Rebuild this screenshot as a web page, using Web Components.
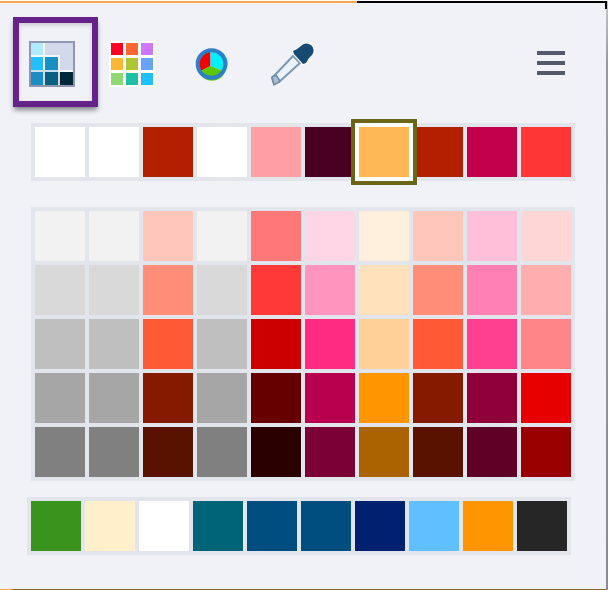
<!DOCTYPE html>
<html>
<head>
<meta charset="utf-8">
<title>Color picker</title>
<style>
    html, body { margin: 0; padding: 0; background: #fff; overflow: hidden; }
</style>
</head>
<body>
<picker-window></picker-window>
<script>
class ToolButton extends HTMLElement {
    constructor() {
        super();
        this.attachShadow({ mode: "open" });
        this.shadowRoot.innerHTML = `
            <style>
                :host {
                    display: block;
                    flex: none;
                    width: var(--w, 46px);
                    height: var(--h, 46px);
                    margin-top: 24px;
                    cursor: pointer;
                }
                :host([active]) {
                    box-sizing: border-box;
                    width: 85px;
                    height: 90px;
                    margin-top: 0;
                    padding: 18px 0 0 10px;
                    border: 6px solid #662288;
                    box-shadow: 0 4px 5px -1px rgba(40, 40, 50, .55), inset 0 2px 4px rgba(40, 40, 50, .2);
                }
                ::slotted(svg) { display: block; filter: blur(.45px); }
            </style>
            <slot></slot>
        `;
    }
}

class ColorSwatch extends HTMLElement {
    constructor() {
        super();
        this.attachShadow({ mode: "open" });
        const color = this.getAttribute("color") || "#fff";
        this.shadowRoot.innerHTML = `
            <style>
                :host {
                    display: block;
                    width: 50px;
                    height: 50px;
                    background: ${color};
                }
                :host([selected]) {
                    position: relative;
                    z-index: 1;
                    box-shadow: 0 0 0 4px #fff, 0 0 0 8px #6a6518;
                }
            </style>
        `;
    }
}

class SwatchTray extends HTMLElement {
    constructor() {
        super();
        this.attachShadow({ mode: "open" });
        this.shadowRoot.innerHTML = `
            <style>
                :host {
                    display: grid;
                    grid-template-columns: repeat(10, 50px);
                    gap: 4px;
                    width: max-content;
                    padding: 4px;
                    background: #e2e5ec;
                }
            </style>
            <slot></slot>
        `;
    }
}

class HamburgerMenu extends HTMLElement {
    constructor() {
        super();
        this.attachShadow({ mode: "open" });
        this.shadowRoot.innerHTML = `
            <style>
                :host {
                    display: flex;
                    flex-direction: column;
                    gap: 6px;
                    flex: none;
                    width: 28px;
                    margin: 34px 41px 0 auto;
                }
                i { display: block; height: 4px; background: #545a6b; }
            </style>
            <i></i><i></i><i></i>
        `;
    }
}

const ICON_THEMES = `<svg width="46" height="46" viewBox="0 0 46 46">
    <rect width="46" height="46" fill="#8f96b0"/>
    <rect x="2" y="2" width="42" height="42" fill="#d3d8ea"/>
    <path d="M14 2h2v12h15v15h13v2H2V14h12z" fill="#f4f7fc"/>
    <rect x="2" y="29" width="27" height="2" fill="#c6e0ec"/>
    <rect x="2" y="2" width="12" height="12" fill="#b0ecff"/>
    <rect x="2" y="16" width="12" height="13" fill="#22bfff"/>
    <rect x="16" y="16" width="13" height="13" fill="#1a8fc4"/>
    <rect x="2" y="31" width="12" height="13" fill="#1a8dc4"/>
    <rect x="16" y="31" width="13" height="13" fill="#0b5f80"/>
    <rect x="31" y="31" width="13" height="13" fill="#002838"/>
</svg>`;

const ICON_PALETTE = `<svg width="46" height="46" viewBox="0 0 46 46">
    <rect width="46" height="46" fill="#fff"/>
    <rect x="2" y="2" width="12" height="12" fill="#ff0022"/>
    <rect x="17" y="2" width="12" height="12" fill="#ff6633"/>
    <rect x="32" y="2" width="12" height="12" fill="#cc77ff"/>
    <rect x="2" y="17" width="12" height="12" fill="#ffb833"/>
    <rect x="17" y="17" width="12" height="12" fill="#b0c433"/>
    <rect x="32" y="17" width="12" height="12" fill="#66a3ff"/>
    <rect x="2" y="32" width="12" height="12" fill="#90d873"/>
    <rect x="17" y="32" width="12" height="12" fill="#1fbfa5"/>
    <rect x="32" y="32" width="12" height="12" fill="#22bfff"/>
</svg>`;

const ICON_WHEEL = `<svg width="34" height="34" viewBox="0 0 34 34">
    <circle cx="17" cy="17" r="16" fill="#e8ecf4"/>
    <path d="M15.500 19V3A14 14 0 0 0 4 25z" fill="#f40000"/>
    <path d="M15.500 19V3A14 14 0 0 1 30 25z" fill="#00f0ff"/>
    <path d="M15.500 19L4 25A14 14 0 0 0 30 25z" fill="#5cc800"/>
    <circle cx="16.500" cy="17" r="13.800" fill="none" stroke="#2f7fc8" stroke-width="4"/>
</svg>`;

const ICON_DROPPER = `<svg width="50" height="50" viewBox="0 0 50 50">
    <path d="M25 16L32 23L11 42L6 44L4 38z" fill="#eaf3fc" stroke="#7f97ac" stroke-width="2" stroke-linejoin="round"/>
    <path d="M4 37L8 35L12 41L6 45z" fill="#a9c0d4" stroke="#6d8ba4" stroke-width="1.500" stroke-linejoin="round"/>
    <path d="M25 11L29 9L33 6A7 7 0 0 1 44 15L41 18L38 23L35 24L26 14z" fill="#174a70" stroke="#fff" stroke-width="2" stroke-linejoin="round" paint-order="stroke"/>
</svg>`;

const RECENT = ["#fff", "#fff", "#b32000", "#fff", "#ff9fa3", "#4a0020", "#ffb855", "#b32000", "#c2004a", "#ff3636"];
const SHADES = [
    ["#f2f2f2", "#f2f2f2", "#ffc7bb", "#f2f2f2", "#ff7878", "#ffd6e6", "#ffefdd", "#ffc7bb", "#ffbfd9", "#ffd6d6"],
    ["#d9d9d9", "#d9d9d9", "#ff8e78", "#d9d9d9", "#ff3838", "#ff94bf", "#ffe1bc", "#ff8e78", "#ff80b2", "#ffaeae"],
    ["#bfbfbf", "#bfbfbf", "#ff5a36", "#bfbfbf", "#cc0000", "#ff2b82", "#ffd199", "#ff5a36", "#ff4091", "#ff8589"],
    ["#a6a6a6", "#a6a6a6", "#861a00", "#a6a6a6", "#660000", "#b8004f", "#ff9500", "#861a00", "#8f0038", "#e60000"],
    ["#808080", "#808080", "#5a1200", "#808080", "#2b0000", "#7a0036", "#aa6300", "#5a1200", "#600026", "#990000"]
];
const BRAND = ["#3a931c", "#ffefca", "#fff", "#006478", "#004d80", "#004d80", "#002170", "#60bfff", "#ff9500", "#262626"];

function swatches(colors, selected) {
    return colors.map((c, i) => `<color-swatch color="${c}"${i === selected ? " selected" : ""}></color-swatch>`).join("");
}

class PickerWindow extends HTMLElement {
    constructor() {
        super();
        this.attachShadow({ mode: "open" });
        this.shadowRoot.innerHTML = `
            <style>
                :host {
                    display: block;
                    position: relative;
                    width: 608px;
                    height: 590px;
                    overflow: hidden;
                }
                .top {
                    box-sizing: border-box;
                    height: 3px;
                    border-top: 1px solid #fff;
                    background: linear-gradient(90deg, #f5a54a 0 357px, #000 357px 606px, #bbb 606px);
                }
                .middle { display: flex; height: 586px; }
                .panel {
                    width: 606px;
                    background: #f0f2f8;
                }
                .right { width: 2px; background: linear-gradient(#c4c4c4 0, #9a9a9a 60px, #8c8c8c 100%); }
                .bottom { height: 1px; background: linear-gradient(90deg, #f5a54a 0 10px, #8a6030 14px, #8a6030 606px, #8c8c8c 606px); }
                .corner {
                    position: absolute;
                    top: 1px;
                    left: 605px;
                    width: 2px;
                    height: 8px;
                    background: #000;
                }
                .tools {
                    display: flex;
                    align-items: flex-start;
                    height: 106px;
                    padding: 14px 0 0 13px;
                    box-sizing: content-box;
                }
                .palette { margin-left: 11px; }
                .wheel { margin: 30px 0 0 40px; --w: 34px; --h: 34px; }
                .dropper { margin: 23px 0 0 39px; --w: 50px; --h: 50px; }
                .recent { margin: 0 0 26px 31px; }
                .shades { margin: 0 0 16px 31px; }
                .brand { margin: 0 0 0 27px; }
            </style>
            <div class="top"></div>
            <div class="corner"></div>
            <div class="middle">
                <div class="panel">
                    <div class="tools">
                        <tool-button active>${ICON_THEMES}</tool-button>
                        <tool-button class="palette">${ICON_PALETTE}</tool-button>
                        <tool-button class="wheel">${ICON_WHEEL}</tool-button>
                        <tool-button class="dropper">${ICON_DROPPER}</tool-button>
                        <hamburger-menu></hamburger-menu>
                    </div>
                    <swatch-tray class="recent">${swatches(RECENT, 6)}</swatch-tray>
                    <swatch-tray class="shades">${SHADES.map(row => swatches(row)).join("")}</swatch-tray>
                    <swatch-tray class="brand">${swatches(BRAND)}</swatch-tray>
                </div>
                <div class="right"></div>
            </div>
            <div class="bottom"></div>
        `;
    }
}

customElements.define("tool-button", ToolButton);
customElements.define("color-swatch", ColorSwatch);
customElements.define("swatch-tray", SwatchTray);
customElements.define("hamburger-menu", HamburgerMenu);
customElements.define("picker-window", PickerWindow);
</script>
</body>
</html>
